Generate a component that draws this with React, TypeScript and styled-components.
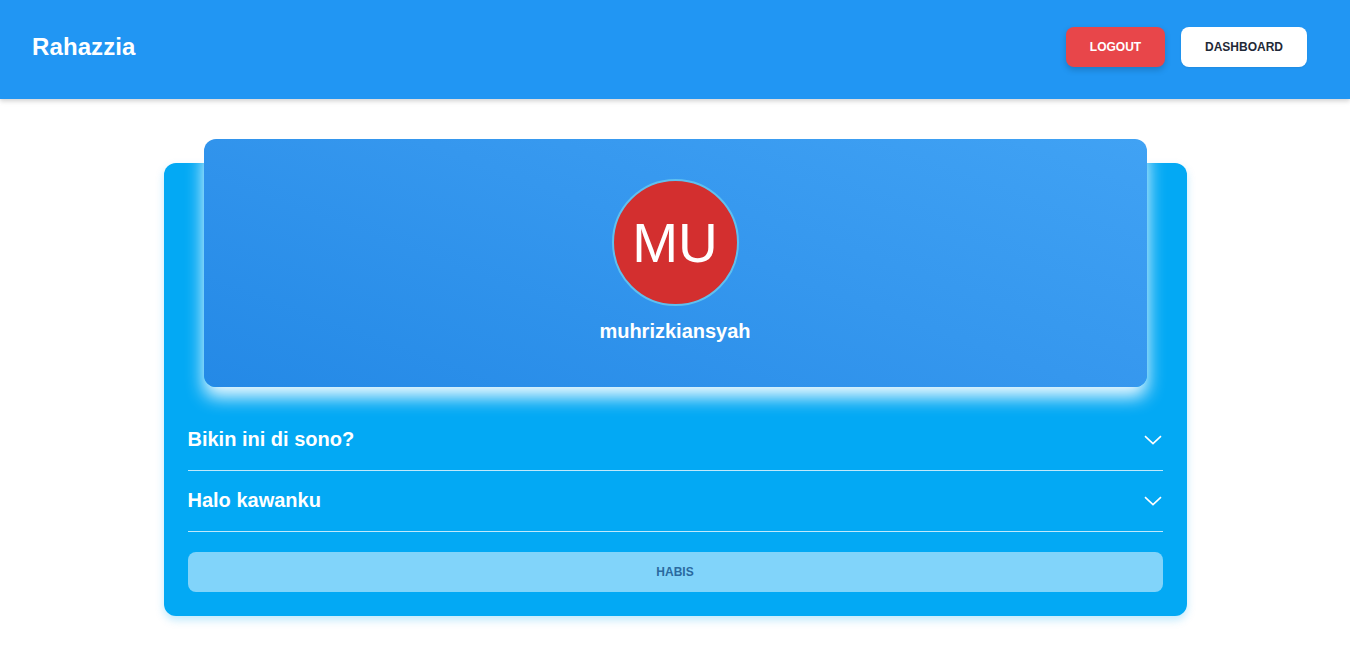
import React from "react";
import styled, { createGlobalStyle } from "styled-components";

const Global = createGlobalStyle`
  html, body { margin: 0; padding: 0; background: #ffffff; }
  body { font-family: "Liberation Sans", Arial, sans-serif; }
  * { box-sizing: border-box; }
`;

const Header = styled.header`
  height: 99px;
  background: #2196f3;
  display: flex;
  align-items: center;
  justify-content: space-between;
  padding: 0 43px 5px 32px;
  box-shadow: 0 2px 4px rgba(0, 0, 0, 0.12), 0 3px 6px rgba(0, 0, 0, 0.06);
  position: relative;
  z-index: 1;
`;

const Brand = styled.h1`
  margin: 0;
  color: #ffffff;
  font-size: 24px;
  font-weight: 700;
  letter-spacing: 0.1px;
`;

const Actions = styled.div`
  display: flex;
  gap: 16px;
  align-items: center;
`;

const NavButton = styled.button<{ $variant: "danger" | "light" }>`
  height: 40px;
  border: none;
  border-radius: 8px;
  font-family: "Liberation Sans", Arial, sans-serif;
  font-size: 12px;
  font-weight: 700;
  text-transform: uppercase;
  cursor: pointer;
  padding: 0;
  width: ${(p) => (p.$variant === "danger" ? "99px" : "126px")};
  background: ${(p) => (p.$variant === "danger" ? "#e8464a" : "#ffffff")};
  color: ${(p) => (p.$variant === "danger" ? "#ffffff" : "#1f2937")};
  box-shadow: ${(p) =>
    p.$variant === "danger"
      ? "0 3px 6px rgba(0,0,0,0.18)"
      : "0 1px 2px rgba(0,0,0,0.08)"};
`;

const Main = styled.main`
  display: flex;
  justify-content: center;
  padding: 64px 0 40px;
`;

const Card = styled.section`
  width: 1023px;
  background: #03a9f4;
  border-radius: 12px;
  padding: 0 24px 24px;
  box-shadow: 0 4px 8px rgba(3, 169, 244, 0.25);
  display: flex;
  flex-direction: column;
`;

const ProfileBanner = styled.div`
  margin: -24px 16px 0;
  height: 248px;
  border-radius: 12px;
  background: linear-gradient(20deg, #2489e6 0%, #3597ee 55%, #40a2f4 100%);
  box-shadow: 0 10px 18px rgba(255, 255, 255, 0.95);
  display: flex;
  flex-direction: column;
  align-items: center;
  padding-top: 40px;
`;

const Avatar = styled.div`
  width: 127px;
  height: 127px;
  border-radius: 50%;
  background: #d32f2f;
  border: 2px solid #5ec0f0;
  display: flex;
  align-items: center;
  justify-content: center;
  color: #ffffff;
  font-size: 55px;
  font-weight: 400;
  font-family: "Liberation Sans", Arial, sans-serif;
`;

const Username = styled.div`
  margin-top: 14px;
  color: #ffffff;
  font-size: 20px;
  font-weight: 700;
`;

const List = styled.div`
  margin-top: 23px;
  display: flex;
  flex-direction: column;
`;

const Row = styled.div`
  height: 61px;
  display: flex;
  align-items: center;
  justify-content: space-between;
  border-bottom: 1px solid rgba(255, 255, 255, 0.75);
  padding-bottom: 1px;
  color: #ffffff;
  font-size: 20px;
  font-weight: 700;
`;

const Chevron = styled.svg`
  width: 18px;
  height: 10px;
  margin-right: 1px;
`;

const ActionButton = styled.button`
  margin-top: 20px;
  height: 40px;
  border: none;
  border-radius: 8px;
  background: #81d4fa;
  color: #2a6aa0;
  font-family: "Liberation Sans", Arial, sans-serif;
  font-size: 12px;
  font-weight: 700;
  text-transform: uppercase;
  cursor: pointer;
`;

const Down = () => (
  <Chevron viewBox="0 0 18 10" fill="none">
    <path d="M1 1.2 L9 8.6 L17 1.2" stroke="#ffffff" strokeWidth="1.6" />
  </Chevron>
);

export default function App() {
  return (
    <>
      <Global />
      <Header>
        <Brand>Rahazzia</Brand>
        <Actions>
          <NavButton $variant="danger">Logout</NavButton>
          <NavButton $variant="light">Dashboard</NavButton>
        </Actions>
      </Header>
      <Main>
        <Card>
          <ProfileBanner>
            <Avatar>MU</Avatar>
            <Username>muhrizkiansyah</Username>
          </ProfileBanner>
          <List>
            <Row>
              <span>Bikin ini di sono?</span>
              <Down />
            </Row>
            <Row>
              <span>Halo kawanku</span>
              <Down />
            </Row>
          </List>
          <ActionButton>Habis</ActionButton>
        </Card>
      </Main>
    </>
  );
}
